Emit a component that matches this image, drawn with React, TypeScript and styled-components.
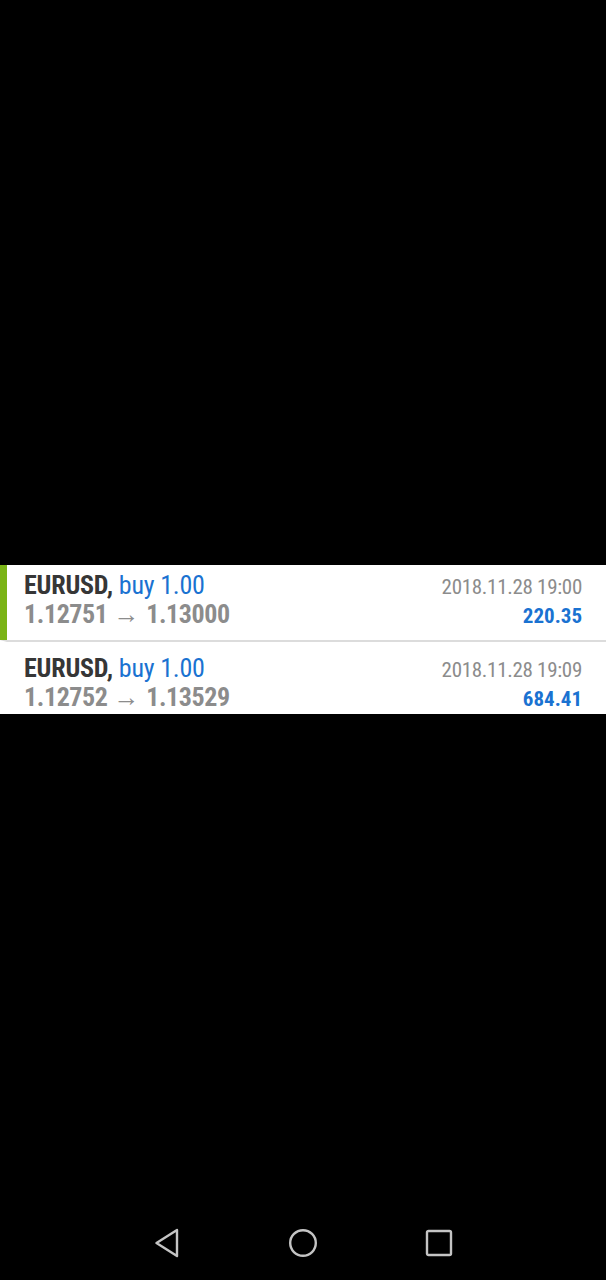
import React from 'react';
import styled, { createGlobalStyle } from 'styled-components';

const GlobalStyle = createGlobalStyle`
  html, body {
    margin: 0;
    padding: 0;
    background: #000;
  }
  * {
    box-sizing: border-box;
  }
`;

const colors = {
  dark: '#363636',
  grey: '#8c8c8c',
  blue: '#1a72d1',
  green: '#7ab317',
  divider: '#dcdcdc',
  nav: '#c4c4c4',
};

const Page = styled.div`
  display: flex;
  flex-direction: column;
  height: 1280px;
  background: #000;
  font-family: 'Roboto Condensed', Roboto, 'Liberation Sans', sans-serif;
`;

const Main = styled.main`
  flex: 1;
  padding-top: 565px;
`;

// visible part of the history list, scrolled a few pixels down
const Viewport = styled.div`
  height: 149px;
  overflow: hidden;
  background: #fff;
`;

const List = styled.ul<{ $scroll: number }>`
  list-style: none;
  margin: ${(p) => -p.$scroll}px 0 0 0;
  padding: 0;
`;

const Row = styled.li<{ $selected?: boolean }>`
  display: flex;
  justify-content: space-between;
  height: 81px;
  padding: 12px 24px 0 17px;
  border-left: 7px solid ${(p) => (p.$selected ? colors.green : 'transparent')};
  & + & {
    border-top: 2px solid ${colors.divider};
    height: 83px;
  }
`;

const Left = styled.div`
  display: flex;
  flex-direction: column;
`;

const Right = styled.div`
  display: flex;
  flex-direction: column;
  align-items: flex-end;
  padding-top: 2px;
`;

const Title = styled.div`
  font-size: 26px;
  line-height: 29px;
  font-weight: 700;
  color: ${colors.dark};
  letter-spacing: -0.2px;
`;

const Deal = styled.span`
  font-weight: 400;
  color: ${colors.blue};
`;

const Prices = styled.div`
  font-size: 26px;
  line-height: 29px;
  font-weight: 700;
  color: ${colors.grey};
  letter-spacing: -0.4px;
`;

const Arrow = styled.span`
  font-weight: 400;
  font-size: 26px;
  margin: 0 7px 0 6px;
`;

const Time = styled.div`
  font-size: 21px;
  line-height: 29px;
  color: ${colors.grey};
  letter-spacing: -0.3px;
`;

const Profit = styled.div`
  font-size: 21px;
  line-height: 29px;
  font-weight: 700;
  color: ${colors.blue};
`;

const NavBar = styled.nav`
  height: 74px;
  display: flex;
  align-items: center;
  justify-content: center;
  gap: 100px;
`;

const NavButton = styled.div`
  width: 36px;
  height: 36px;
  display: flex;
  align-items: center;
  justify-content: center;
`;

type Trade = {
  symbol: string;
  deal: string;
  open: string;
  close: string;
  time: string;
  profit: string;
  selected?: boolean;
};

const trades: Trade[] = [
  {
    symbol: 'EURUSD',
    deal: 'buy 1.00',
    open: '1.12751',
    close: '1.13000',
    time: '2018.11.28 19:00',
    profit: '220.35',
    selected: true,
  },
  {
    symbol: 'EURUSD',
    deal: 'buy 1.00',
    open: '1.12752',
    close: '1.13529',
    time: '2018.11.28 19:09',
    profit: '684.41',
  },
];

function App(): JSX.Element {
  return (
    <Page>
      <GlobalStyle />
      <Main>
        <Viewport>
          <List $scroll={6}>
            {trades.map((t) => (
              <Row key={t.time} $selected={t.selected}>
                <Left>
                  <Title>
                    {t.symbol}, <Deal>{t.deal}</Deal>
                  </Title>
                  <Prices>
                    {t.open}
                    <Arrow>→</Arrow>
                    {t.close}
                  </Prices>
                </Left>
                <Right>
                  <Time>{t.time}</Time>
                  <Profit>{t.profit}</Profit>
                </Right>
              </Row>
            ))}
          </List>
        </Viewport>
      </Main>
      <NavBar>
        <NavButton>
          <svg width="28" height="32" viewBox="0 0 28 32" fill="none">
            <path
              d="M24 3 L3.5 16 L24 29 Z"
              stroke={colors.nav}
              strokeWidth="2.4"
              strokeLinejoin="round"
            />
          </svg>
        </NavButton>
        <NavButton>
          <svg width="30" height="30" viewBox="0 0 30 30" fill="none">
            <circle cx="15" cy="15" r="12.8" stroke={colors.nav} strokeWidth="2.4" />
          </svg>
        </NavButton>
        <NavButton>
          <svg width="28" height="28" viewBox="0 0 28 28" fill="none">
            <rect
              x="2"
              y="2"
              width="24"
              height="24"
              rx="1.5"
              stroke={colors.nav}
              strokeWidth="2.4"
            />
          </svg>
        </NavButton>
      </NavBar>
    </Page>
  );
}

export default App;
